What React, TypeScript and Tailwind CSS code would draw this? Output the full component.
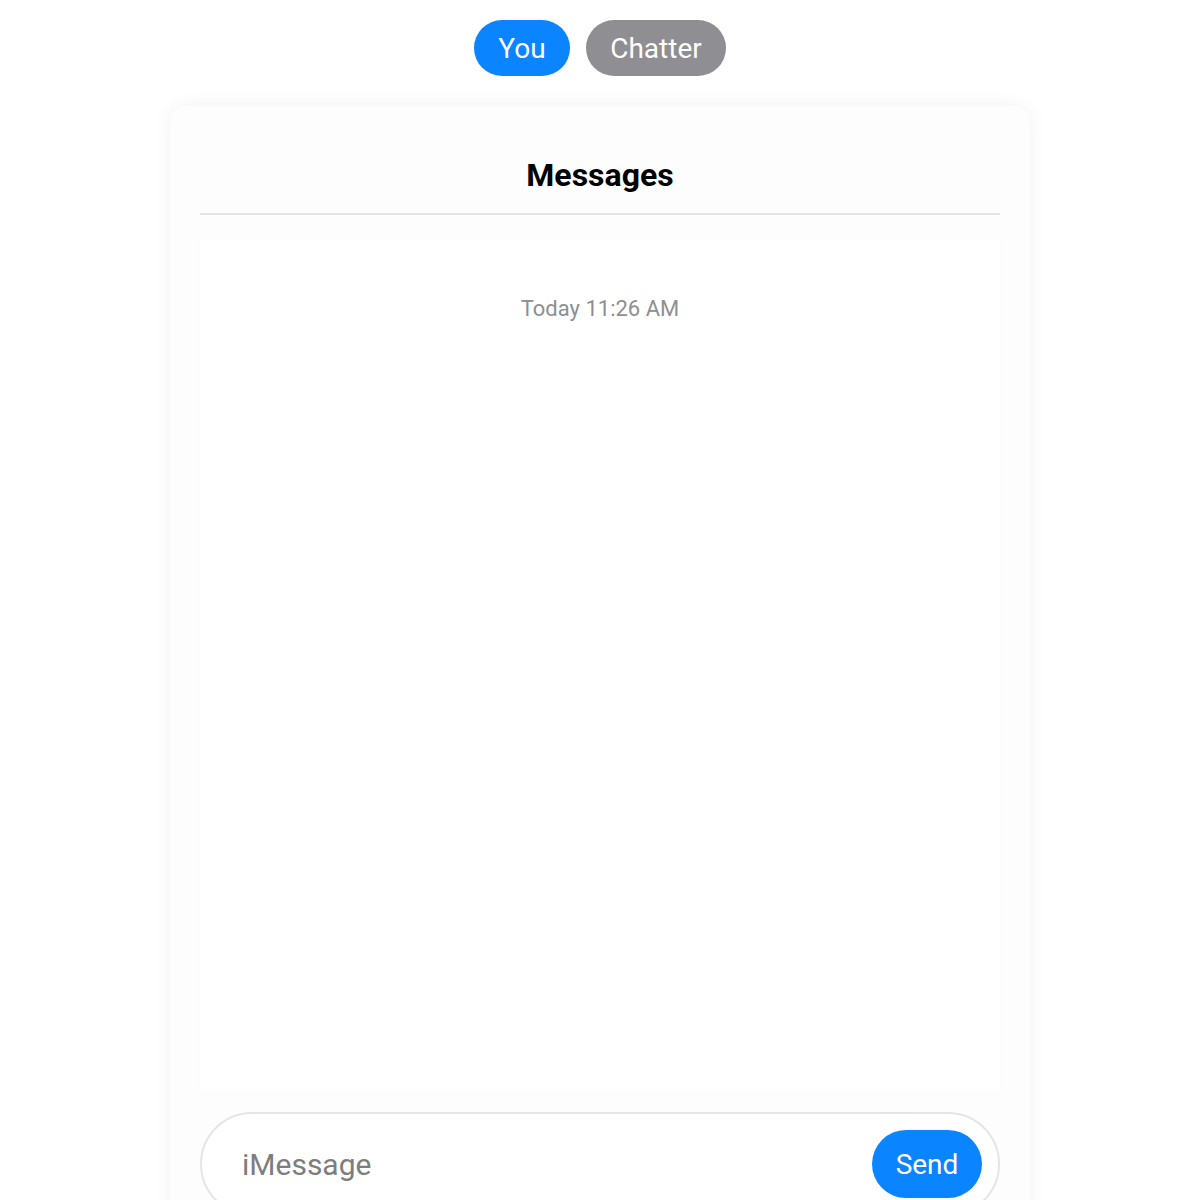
export default function App() {
  return (
    <div className="min-h-[1200px] bg-white flex flex-col items-center pt-5 overflow-hidden" style={{ fontFamily: "Roboto, 'Liberation Sans', sans-serif" }}>
      <div className="flex gap-4">
        <button className="h-14 w-[96px] rounded-full bg-[#0a84ff] text-white text-[28px] leading-none pt-[2px]">You</button>
        <button className="h-14 w-[140px] rounded-full bg-[#8e8e93] text-white text-[28px] leading-none pt-[2px]">Chatter</button>
      </div>
      <div className="mt-[30px] w-[860px] rounded-2xl bg-[#fdfdfd] shadow-[0_0_20px_rgba(0,0,0,0.06)] px-[30px] pt-[30px] pb-[40px]">
        <div className="pt-[21px] pb-[20px] border-b-2 border-[#e3e3e3] text-center">
          <h1 className="text-[32px] leading-9 font-bold text-black">Messages</h1>
        </div>
        <div className="mt-[25px] h-[850px] bg-white shadow-[0_0_3px_rgba(0,0,0,0.015)] pt-[56px] flex flex-col items-center">
          <div className="text-[22px] leading-[26px] text-[#8e8e93]">Today 11:26 AM</div>
        </div>
        <div className="mt-[22px] h-[104px] rounded-full border-2 border-[#e5e5e5] bg-white flex items-center pl-10 pr-4">
          <input className="flex-1 bg-transparent outline-none text-[30px] text-[#333] placeholder:text-[#7d7d7d]" placeholder="iMessage" />
          <button className="h-[68px] w-[110px] rounded-full bg-[#0a84ff] text-white text-[28px] leading-none pt-[2px]">Send</button>
        </div>
      </div>
    </div>
  );
}
